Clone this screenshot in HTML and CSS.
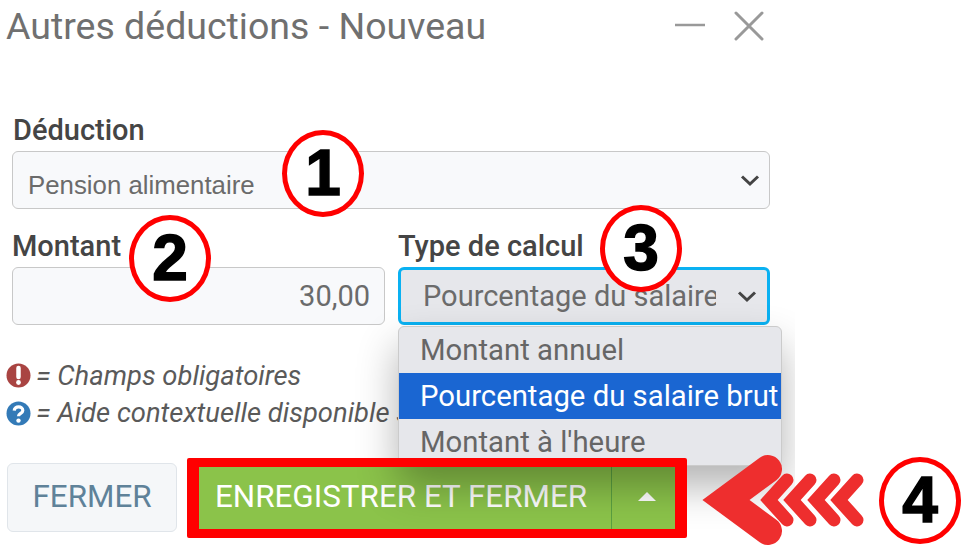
FILE: index.html
```html
<!DOCTYPE html>
<html lang="fr">
<head>
    <meta charset="UTF-8">
    <meta name="viewport" content="width=device-width, initial-scale=1.0">
    <title>Autres déductions - Nouveau</title>
    <link rel="stylesheet" href="styles.css">
</head>
<body>

<div class="page">
    <div class="dialog">
        <div class="dialog-header">
            <h1>Autres déductions - Nouveau</h1>
            <div class="window-btns">
                <svg class="win-min" width="30" height="4" viewBox="0 0 30 4"><path d="M0 2H30" stroke="#999" stroke-width="2.5"/></svg>
                <svg class="win-close" width="30" height="30" viewBox="0 0 30 30"><path d="M2 2L28 28M28 2L2 28" stroke="#999" stroke-width="3" stroke-linecap="round"/></svg>
            </div>
        </div>

        <div class="form">
            <label class="field-label label-first">Déduction</label>
            <div class="control control-select">
                <span class="select-text arial">Pension alimentaire</span>
                <svg class="chevron" width="20" height="13" viewBox="0 0 20 13"><path d="M2 2.5L10 10L18 2.5" fill="none" stroke="#444" stroke-width="3"/></svg>
            </div>

            <div class="form-row">
                <div>
                    <label class="field-label">Montant</label>
                    <div class="control control-number">30,00</div>
                </div>
                <div class="type-field">
                    <label class="field-label">Type de calcul</label>
                    <div class="control control-focus">
                        <span class="select-clip">Pourcentage du salaire brut</span>
                        <svg class="chevron" width="20" height="13" viewBox="0 0 20 13"><path d="M2 2.5L10 10L18 2.5" fill="none" stroke="#444" stroke-width="3"/></svg>
                    </div>
                    <ul class="dropdown">
                        <li>Montant annuel</li>
                        <li class="selected">Pourcentage du salaire brut</li>
                        <li>Montant à l'heure</li>
                    </ul>
                </div>
            </div>
        </div>

        <div class="legend">
            <div class="legend-row">
                <svg width="25" height="25" viewBox="0 0 25 25"><circle cx="12.5" cy="12.5" r="12" fill="#a94442"/><path d="M12.5 5V14" stroke="#fff" stroke-width="4.5" stroke-linecap="round"/><circle cx="12.5" cy="19.5" r="2.4" fill="#fff"/></svg>
                <span>= Champs obligatoires</span>
            </div>
            <div class="legend-row">
                <svg width="25" height="25" viewBox="0 0 25 25"><circle cx="12.5" cy="12.5" r="12" fill="#337ab7"/><path d="M8.2 9.6C8.4 4.8 16.8 4.6 16.8 9.4C16.8 12.4 12.5 12.2 12.5 15.2" fill="none" stroke="#fff" stroke-width="3.2"/><circle cx="12.5" cy="19.6" r="2.2" fill="#fff"/></svg>
                <span>= Aide contextuelle disponible sur</span>
            </div>
        </div>

        <div class="footer">
            <button class="btn-close">FERMER</button>
            <div class="btn-group">
                <button class="btn-save">ENREGISTRER ET FERMER</button>
                <button class="btn-toggle"><span class="caret"></span></button>
            </div>
        </div>
    </div>

    <!-- annotations over the screenshot -->
    <div class="red-frame"></div>
    <div class="step step-1">1</div>
    <div class="step step-2">2</div>
    <div class="step step-3">3</div>
    <div class="step step-4">4</div>
    <svg class="arrow" width="190" height="103" viewBox="690 445 190 103">
        <g class="arrow-small" fill="none" stroke="#ee2e2e" stroke-width="13" stroke-linecap="round" stroke-miterlimit="10">
            <path d="M787 480L769 500L787 520"/>
            <path d="M810 480L792 500L810 520"/>
            <path d="M834 480L816 500L834 520"/>
            <path d="M857 480L839 500L857 520"/>
        </g>
        <path d="M768 469L726 500L768 531" fill="none" stroke="#ee2e2e" stroke-width="28" stroke-linecap="round" stroke-miterlimit="10"/>
    </svg>
</div>

</body>
</html>
```

FILE: styles.css
```css
body {
    margin: 0;
    background: #fff;
    font-family: Roboto, sans-serif;
    overflow: hidden;
}
.page {
    position: relative;
    width: 969px;
    height: 548px;
    overflow: hidden;
}
.dialog {
    width: 795px;
    height: 538px;
    overflow: hidden;
}
.dialog-header {
    display: flex;
    justify-content: space-between;
    align-items: center;
    width: 758px;
    height: 52px;
    padding-left: 6px;
}
.dialog-header h1 {
    margin: 0;
    font-size: 37.5px;
    font-weight: 400;
    color: #707070;
}
.window-btns {
    display: flex;
    align-items: center;
    gap: 29px;
}
.win-min {
    margin-top: -3px;
}
.form {
    width: 758px;
    margin: 63px 0 0 12px;
}
.field-label {
    display: block;
    height: 30px;
    line-height: 30px;
    margin-bottom: 6px;
    font-size: 29px;
    font-weight: 500;
    color: #454545;
}
.label-first {
    padding-left: 1px;
}
.control {
    display: flex;
    align-items: center;
    box-sizing: border-box;
    height: 58px;
    border: 1.5px solid #c8c8c8;
    border-radius: 6px;
    background: #f8f9fb;
    font-size: 29px;
    color: #6b6b6b;
}
.control-select {
    justify-content: space-between;
    padding: 0 9px 0 15px;
}
.arial {
    margin-top: 10px;
    font-family: "Liberation Sans", Arial, sans-serif;
    font-size: 25.8px;
}
.control-number {
    justify-content: flex-end;
    padding-right: 14px;
}
.control-focus {
    justify-content: space-between;
    padding: 0 10px 0 22px;
    border: 3px solid #0ab1f2;
    background: #e6e7eb;
}
.select-clip {
    width: 293px;
    overflow: hidden;
    white-space: nowrap;
}
.form-row {
    display: grid;
    grid-template-columns: 373px 372px;
    gap: 13px;
    margin-top: 22px;
}
.type-field {
    position: relative;
}
.dropdown {
    position: absolute;
    z-index: 2;
    left: 0;
    top: 95px;
    box-sizing: border-box;
    width: 384px;
    margin: 0;
    padding: 0;
    list-style: none;
    border: 1px solid #cbcbcb;
    border-radius: 6px;
    background: #e6e7eb;
    box-shadow: 0 20px 40px rgba(0, 0, 0, .3);
    font-size: 29.3px;
    color: #666;
}
.dropdown li {
    height: 46px;
    line-height: 47px;
    padding-left: 21px;
    white-space: nowrap;
}
.dropdown .selected {
    background: #1a66d2;
    color: #fff;
}
.legend {
    margin: 32px 0 0 6px;
}
.legend-row {
    display: flex;
    align-items: center;
    gap: 5px;
    height: 37.5px;
    font-size: 27.4px;
    font-style: italic;
    color: #5a5a5a;
    white-space: nowrap;
}
.footer {
    display: flex;
    gap: 10px;
    height: 69px;
    margin: 31px 0 0 7px;
}
.footer button {
    height: 69px;
    margin: 0;
    padding: 0 0 2px;
    font-family: Roboto, sans-serif;
    font-size: 31.4px;
}
.btn-close {
    width: 170px;
    border: 1.5px solid #e0e5ea;
    border-radius: 6px;
    background: #f5f7f9;
    color: #5f8299;
}
.btn-group {
    display: flex;
    width: 500px;
}
.btn-group button {
    border: none;
    background: #8bc34a;
    color: #fff;
}
.btn-group .btn-save {
    width: 425px;
    padding-left: 4px;
    border-right: 1px solid #5aa040;
}
.btn-group .btn-toggle {
    display: flex;
    flex: 1;
    align-items: center;
    justify-content: center;
}
.caret {
    width: 0;
    height: 0;
    margin-left: -5px;
    border-left: 9px solid transparent;
    border-right: 9px solid transparent;
    border-bottom: 9px solid #fff;
}
.red-frame {
    position: absolute;
    z-index: 3;
    left: 187px;
    top: 458px;
    box-sizing: border-box;
    width: 500px;
    height: 80px;
    border: solid #f00;
    border-width: 9px 12px;
    border-radius: 2px;
}
.step {
    position: absolute;
    z-index: 4;
    box-sizing: border-box;
    width: 82px;
    height: 87px;
    border: 5px solid #f00;
    border-radius: 50%;
    background: #fff;
    text-align: center;
    line-height: 77px;
    font-family: "Liberation Sans", Arial, sans-serif;
    font-size: 64px;
    font-weight: 700;
    color: #000;
    -webkit-text-stroke: 1.5px #000;
}
.step-1 { left: 282px; top: 130px; }
.step-2 { left: 129px; top: 215px; }
.step-3 { left: 600px; top: 205px; }
.step-4 { left: 879px; top: 457px; }
.arrow {
    position: absolute;
    z-index: 4;
    left: 690px;
    top: 445px;
}
.arrow-small {
    filter: blur(.5px);
}
```
